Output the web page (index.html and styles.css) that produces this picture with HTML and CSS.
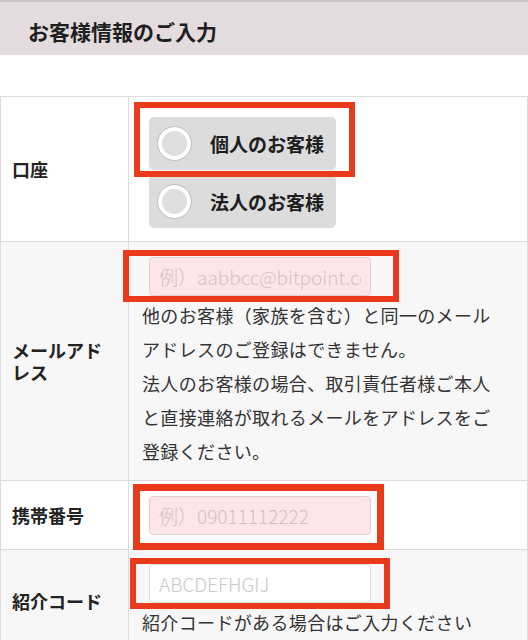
FILE: index.html
```html
<!DOCTYPE html>
<html lang="ja">
<head>
<meta charset="utf-8">
<title>お客様情報のご入力</title>
<link rel="stylesheet" href="styles.css">
</head>
<body>
<h1 class="page-title">お客様情報のご入力</h1>
<div class="form-table">
  <div class="row">
    <div class="label">口座</div>
    <div class="field">
      <div class="choices">
        <label class="choice mark mark-radio"><span class="radio"></span><span class="choice-text">個人のお客様</span></label>
        <label class="choice"><span class="radio"></span><span class="choice-text">法人のお客様</span></label>
      </div>
    </div>
  </div>
  <div class="row alt">
    <div class="label">メールアドレス</div>
    <div class="field">
      <div class="mark mark-email"><input class="input pink" type="text" placeholder="例）aabbcc@bitpoint.cc"></div>
      <p class="note">他のお客様（家族を含む）と同一のメール<br>アドレスのご登録はできません。<br>法人のお客様の場合、取引責任者様ご本人<br>と直接連絡が取れるメールをアドレスをご<br>登録ください。</p>
    </div>
  </div>
  <div class="row">
    <div class="label">携帯番号</div>
    <div class="field">
      <div class="mark mark-phone"><input class="input pink" type="text" placeholder="例）09011112222"></div>
    </div>
  </div>
  <div class="row alt last">
    <div class="label">紹介コード</div>
    <div class="field">
      <div class="mark mark-code"><input class="input plain" type="text" placeholder="ABCDEFHGIJ"></div>
      <p class="note">紹介コードがある場合はご入力ください</p>
    </div>
  </div>
</div>
</body>
</html>
```
FILE: styles.css
```css
* { box-sizing: border-box; }
html, body { margin: 0; padding: 0; background: #fff; }
body {
  width: 528px;
  font-family: "Noto Sans CJK JP", "Noto Sans", sans-serif;
  color: #222;
}
.page-title {
  margin: 0 0 41px;
  height: 55px;
  border-top: 2px solid #cbc5c7;
  background: #e3dbde;
  padding: 6px 0 0 28px;
  font-size: 21px;
  line-height: 47px;
  font-weight: 700;
  color: #1e1e1e;
}
.form-table {
  width: 528px;
  border: 1px solid #dcdcdc;
  border-bottom: none;
}
.row {
  display: grid;
  grid-template-columns: 128px 1fr;
  border-bottom: 1px solid #dcdcdc;
  background: #fff;
}
.row.alt { background: #f7f7f7; }
.label {
  display: flex;
  align-items: center;
  padding: 0 12px 0 11px;
  border-right: 1px solid #dcdcdc;
  font-size: 18px;
  line-height: 22px;
  font-weight: 700;
  color: #222;
}
.field {
  padding: 15px 0 12px 13px;
}
.row:first-child .field { padding-top: 20px; padding-bottom: 13px; }
.row:nth-child(3) .field { padding-top: 15px; padding-bottom: 14px; }
.row.last .field { padding-top: 14px; padding-bottom: 12px; }
.choices {
  display: flex;
  flex-direction: column;
  gap: 5px;
  margin-left: 7px;
}
.choice {
  display: flex;
  align-items: center;
  gap: 18px;
  width: 187px;
  height: 53px;
  padding-left: 8px;
  background: #dcdcdc;
  border-radius: 5px;
}
.radio {
  flex: none;
  width: 35px;
  height: 35px;
  border-radius: 50%;
  background: #dedede;
  border: 1px solid #c2c2c2;
  box-shadow: inset 0 0 0 4px #fff;
}
.choice-text {
  font-size: 19px;
  font-weight: 700;
  color: #1e1e1e;
}
.mark {
  position: relative;
  width: 222px;
  margin-left: 7px;
}
.mark.choice { width: 187px; margin-left: 0; }
.mark::after {
  content: "";
  position: absolute;
  border: 6px solid #ea3a1c;
  pointer-events: none;
  z-index: 2;
}
.mark-radio::after { top: -15px; bottom: -7px; left: -15px; right: -19px; }
.mark-email::after { top: -7px; bottom: -6px; left: -26px; right: -28px; }
.mark-phone::after { top: -12px; bottom: -15px; left: -16px; right: -13px; border-width: 7px; }
.mark-code::after { top: -6px; bottom: -6px; left: -19px; right: -19px; }
.input {
  display: block;
  width: 222px;
  height: 39px;
  margin: 0;
  padding: 0 9px;
  border-radius: 4px;
  font-family: "Noto Sans CJK JP", "Noto Sans", sans-serif;
  font-size: 19px;
  font-weight: 300;
  outline: none;
}
.input.pink {
  background: #fde5e9;
  border: 1px solid #e6ccd1;
}
.input.pink::placeholder { color: #d9bec4; }
.input.plain {
  background: #fff;
  border: 1px solid #dcdcdc;
}
.input.plain::placeholder { color: #c9c9c9; }
.note {
  margin: 2px 0 0;
  font-size: 18px;
  line-height: 34px;
  letter-spacing: 0.35px;
  color: #333;
  white-space: nowrap;
}
```
